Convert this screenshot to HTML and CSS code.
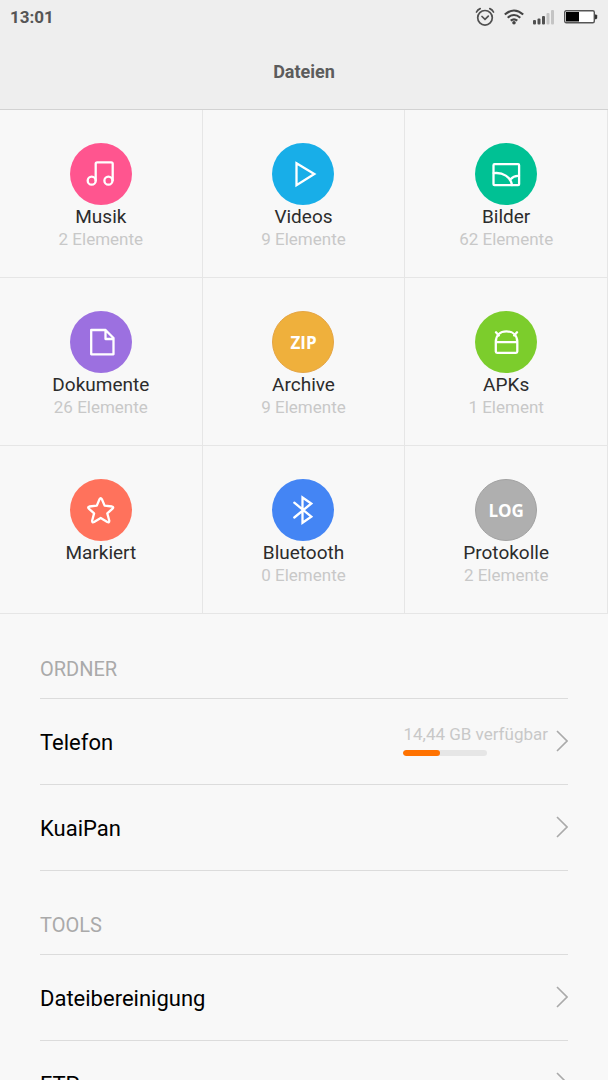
FILE: index.html
```html
<!DOCTYPE html>
<html lang="de">
<head>
<meta charset="utf-8">
<meta name="viewport" content="width=device-width, initial-scale=1">
<title>Dateien</title>
<link rel="stylesheet" href="styles.css">
</head>
<body>
<header class="top">
  <div class="status">
    <time class="clock">13:01</time>
    <div class="indicators">
      <svg width="20" height="20" viewBox="0 0 20 20" fill="none" stroke="#505050" stroke-width="1.7" stroke-linecap="round" aria-label="Wecker" role="img">
        <circle cx="10" cy="10.800" r="7.300"/><path d="M7 9.500l3 2.800 3.300-3.200M1.500 5Q2.600 2.600 5.200 1.600M18.500 5Q17.400 2.600 14.800 1.600"/>
      </svg>
      <svg width="20" height="16" viewBox="0 0 20 16" fill="none" stroke="#444" stroke-width="2.100" aria-label="WLAN" role="img">
        <path d="M.8 5.500Q10-2.500 19.200 5.500M3.700 8.700Q10 3.300 16.300 8.700M6.700 11.600Q10 9 13.300 11.600"/><circle cx="10" cy="13.700" r="1.800" fill="#444" stroke="none"/>
      </svg>
      <svg width="22" height="16" viewBox="0 0 22 16" aria-label="Mobilfunk" role="img">
        <g fill="#505050"><rect x="0" y="11" width="3" height="4.500" rx="1"/><rect x="4.500" y="9.500" width="3" height="6" rx="1"/><rect x="9" y="7" width="3" height="8.500" rx="1"/></g>
        <g fill="#c4c4c4"><rect x="13.500" y="4" width="3" height="11.500" rx="1"/><rect x="18" y="1" width="3" height="14.500" rx="1"/></g>
      </svg>
      <svg width="34" height="14" viewBox="0 0 34 14" aria-label="Akku" role="img">
        <rect x=".7" y=".7" width="29.600" height="12.100" rx="1.500" fill="#fff" stroke="#555" stroke-width="1.400"/><rect x="2" y="2" width="13" height="9.500"/><path d="M31 4.500h1.200l1 1v2.800l-1 1H31z" fill="#333"/>
      </svg>
    </div>
  </div>
  <h1 class="title">Dateien</h1>
</header>
<main class="content">
  <nav class="grid" aria-label="Kategorien">
    <a class="tile" href="#musik">
      <svg class="disc pink" viewBox="0 0 62 62"><circle cx="21.700" cy="37.700" r="4"/><circle cx="38.400" cy="37.700" r="4"/><path d="M25.700 37.500V20.800q0-1.500 1.500-1.500h14q1.500 0 1.500 1.500v16.700"/></svg>
      <span class="name">Musik</span><span class="count">2 Elemente</span>
    </a>
    <a class="tile" href="#videos">
      <svg class="disc blue" viewBox="0 0 62 62"><path d="M24.500 20.200 42.300 31 24.500 42.200z" stroke-linejoin="miter"/></svg>
      <span class="name">Videos</span><span class="count">9 Elemente</span>
    </a>
    <a class="tile" href="#bilder">
      <svg class="disc teal" viewBox="0 0 62 62"><rect x="18.500" y="21.200" width="25.600" height="21" rx="1"/><path d="M18.700 30.200C28 29 35.500 34 37 42M35.300 36.500Q39 32.500 44 33"/></svg>
      <span class="name">Bilder</span><span class="count">62 Elemente</span>
    </a>
    <a class="tile" href="#dokumente">
      <svg class="disc violet" viewBox="0 0 62 62"><path d="M21.200 19H35.500L43.500 27V43.300H21.200zM35.500 19v9h8"/></svg>
      <span class="name">Dokumente</span><span class="count">26 Elemente</span>
    </a>
    <a class="tile" href="#archive">
      <span class="disc amber">ZIP</span>
      <span class="name">Archive</span><span class="count">9 Elemente</span>
    </a>
    <a class="tile" href="#apks">
      <svg class="disc green" viewBox="0 0 62 62"><path d="M20.800 31.200C20.800 24.500 25 20.400 31.500 20.400S42.300 24.500 42.300 31.200V40.500q0 1.300-1.300 1.300H22.100q-1.300 0-1.300-1.300zH42.300M21 21.300l2.800 3.200M42 21.300l-2.800 3.200"/></svg>
      <span class="name">APKs</span><span class="count">1 Element</span>
    </a>
    <a class="tile" href="#markiert">
      <svg class="disc coral" viewBox="0 0 62 62"><path d="M29.500 20.300Q30.700 18 31.900 20.300L34.600 26.600 42 27.500Q44 28 42.600 29.600L37.300 34.400 39.300 41.700Q39.300 44 37.300 43L30.700 39 24.100 43Q22.100 44 22.100 41.700L24.100 34.400 18.800 29.600Q17.400 28 19.400 27.500L26.800 26.600z"/></svg>
      <span class="name">Markiert</span>
    </a>
    <a class="tile" href="#bluetooth">
      <svg class="disc azure" viewBox="0 0 62 62"><path d="M22.300 23.700 39.300 37.700 30.500 43.800V18.500L39.300 24.500 22.300 38.500" stroke-linejoin="miter"/></svg>
      <span class="name">Bluetooth</span><span class="count">0 Elemente</span>
    </a>
    <a class="tile" href="#protokolle">
      <span class="disc gray">LOG</span>
      <span class="name">Protokolle</span><span class="count">2 Elemente</span>
    </a>
  </nav>
  <section class="group">
    <h2 class="heading">ORDNER</h2>
    <a class="row" href="#telefon">
      <span class="label">Telefon</span>
      <span class="storage"><span class="free">14,44 GB verfügbar</span><span class="bar"><span class="used" style="width:43%"></span></span></span>
      <svg class="arrow" viewBox="0 0 12 22"><path d="M1 1 11 11 1 21"/></svg>
    </a>
    <a class="row" href="#kuaipan">
      <span class="label">KuaiPan</span>
      <svg class="arrow" viewBox="0 0 12 22"><path d="M1 1 11 11 1 21"/></svg>
    </a>
  </section>
  <section class="group">
    <h2 class="heading">TOOLS</h2>
    <a class="row" href="#bereinigung">
      <span class="label">Dateibereinigung</span>
      <svg class="arrow" viewBox="0 0 12 22"><path d="M1 1 11 11 1 21"/></svg>
    </a>
    <a class="row" href="#ftp">
      <span class="label">FTP</span>
      <svg class="arrow" viewBox="0 0 12 22"><path d="M1 1 11 11 1 21"/></svg>
    </a>
  </section>
</main>
</body>
</html>
```
FILE: styles.css
```css
* { box-sizing: border-box; }

body {
  margin: 0;
  height: 100vh;
  display: flex;
  flex-direction: column;
  overflow: hidden;
  background: #f8f8f8;
  color: #000;
  font-family: Roboto, "Noto Sans", sans-serif;
}

a { color: inherit; text-decoration: none; }

.top {
  flex: none;
  background: #eee;
  border-bottom: 1px solid #d2d2d2;
}

.status {
  display: flex;
  align-items: center;
  justify-content: space-between;
  height: 34px;
  padding: 0 10px;
}

.clock { color: #555; font-size: 17px; font-weight: 700; }

.indicators { display: flex; align-items: center; gap: 9px; }

.title {
  margin: 0;
  padding: 26px 0;
  color: #5c5c5c;
  font-size: 18px;
  font-weight: 700;
  line-height: 23px;
  text-align: center;
}

.content {
  flex: 1;
  min-height: 0;
  overflow-y: auto;
  scrollbar-width: none;
}

.grid {
  display: grid;
  grid-template-columns: repeat(3, 1fr);
  padding-bottom: 1px;
}

.tile {
  display: flex;
  flex-direction: column;
  align-items: center;
  min-height: 168px;
  padding: 33px 0 24px;
  border-right: 1px solid #e6e6e6;
  border-bottom: 1px solid #e6e6e6;
}

.disc {
  display: flex;
  align-items: center;
  justify-content: center;
  width: 62px;
  height: 62px;
  border-radius: 50%;
  color: #fff;
  font: 700 17px "Open Sans", "Noto Sans", sans-serif;
  fill: none;
  stroke: #fff;
  stroke-width: 2.300;
  stroke-linecap: round;
  stroke-linejoin: round;
}

span.disc { stroke: none; }

.pink { background: #ff558f; }
.blue { background: #18aee8; }
.teal { background: #00c194; }
.violet { background: #9c70e0; }
.amber { background: #efb03c; border: 1px solid #e5a545; }
.green { background: #7ccd2c; }
.coral { background: #ff725c; }
.azure { background: #4485f4; }
.gray { background: #afafaf; border: 1px solid #a2a2a2; }

.name { color: #2c2c2c; font-size: 19px; line-height: 24px; }
.count { color: #c8c8c8; font-size: 17px; line-height: 20px; }

.group { padding: 0 40px; }

.heading {
  margin: 0;
  padding: 42px 0 17px;
  border-bottom: 1px solid #dcdcdc;
  color: #aaa;
  font-size: 20px;
  font-weight: 400;
  line-height: 24px;
}

.row {
  display: flex;
  align-items: center;
  min-height: 86px;
  border-bottom: 1px solid #dcdcdc;
}

.label { flex: 1; padding-top: 2px; font-size: 22px; line-height: 28px; }

.storage {
  display: flex;
  flex-direction: column;
  gap: 6px;
  margin-right: 8px;
  padding-bottom: 4px;
}

.free { color: #c8c8c8; font-size: 17px; line-height: 20px; }

.bar {
  width: 84px;
  height: 6px;
  border-radius: 3px;
  background: #e6e6e6;
  overflow: hidden;
}

.used { display: block; height: 100%; border-radius: 3px; background: #ff7200; }

.arrow {
  width: 12px;
  height: 22px;
  margin-bottom: 2px;
  fill: none;
  stroke: #aaa;
  stroke-width: 1.600;
}
```
